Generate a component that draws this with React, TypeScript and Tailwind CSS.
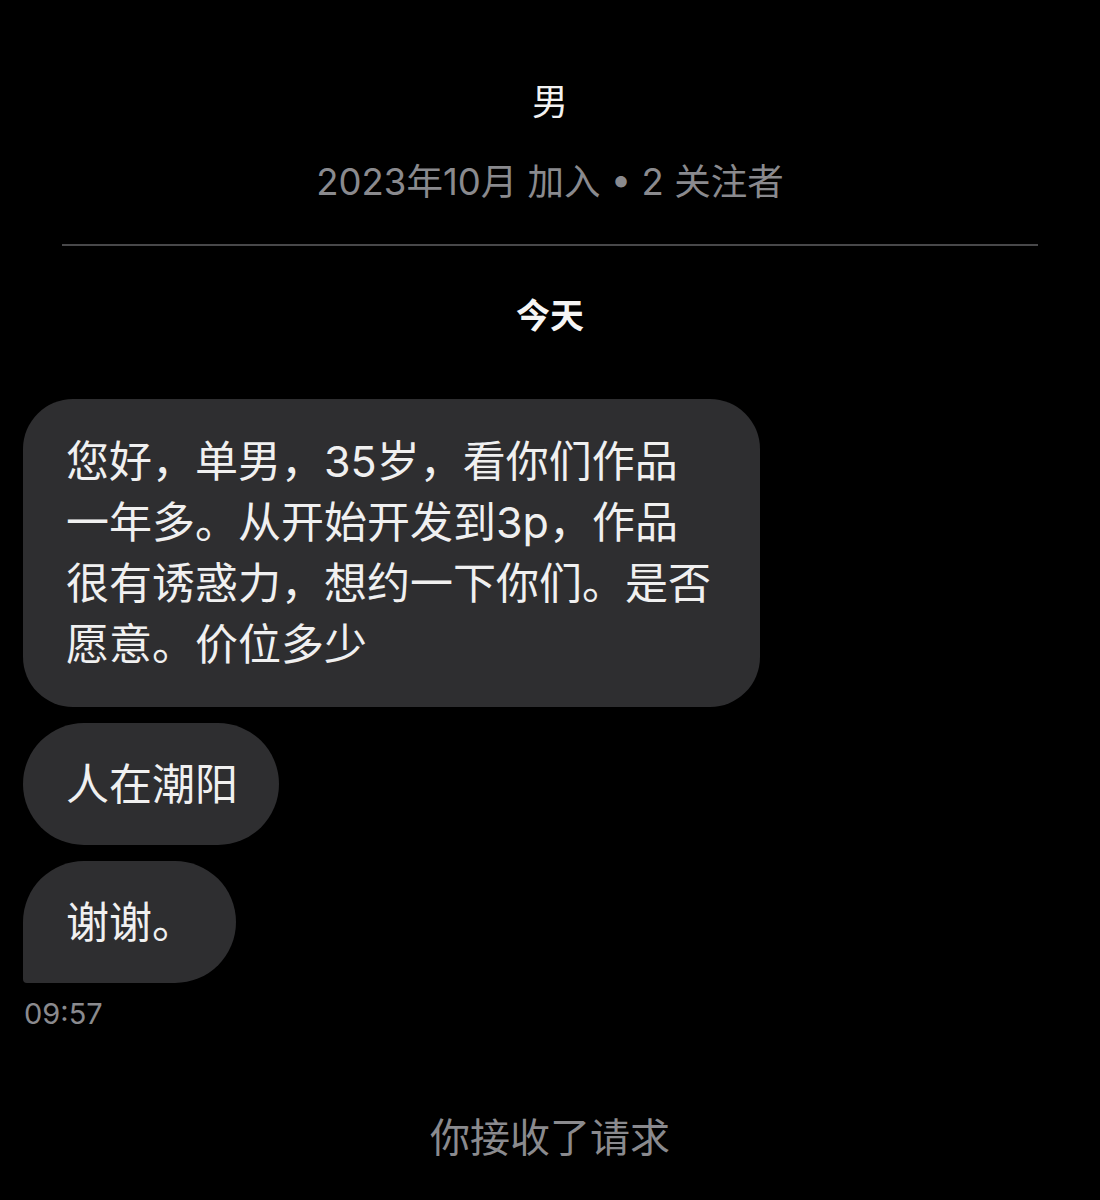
import React from "react";

const font = { fontFamily: 'Inter, "Noto Sans CJK SC", "Noto Sans", sans-serif' };

export default function App() {
  return (
    <div className="min-h-[1200px] w-[1100px] bg-black flex flex-col" style={font}>
      <div className="pt-[80px] text-center text-[36px] leading-[44px] text-[#f2f2f2]">男</div>
      <div className="mt-[36px] text-center text-[36.5px] leading-[44px] text-[#8a8a8e]">
        2023年10月 加入 • 2 关注者
      </div>
      <div className="mt-[40px] mx-[62px] h-[2px] bg-[#48484a]" />
      <div className="mt-[48px] text-center text-[34px] leading-[44px] font-bold text-[#f5f5f5]">今天</div>

      <div className="mt-[61px] pl-[23px] flex flex-col items-start gap-[16px]">
        <div className="w-[737px] rounded-[50px] bg-[#2e2e30] pl-[43px] pr-[20px] py-[32px] text-[43px] leading-[61px] text-[#f0f0f0] whitespace-nowrap">
          <div>您好，单男，35岁，看你们作品</div>
          <div>一年多。从开始开发到3p，作品</div>
          <div>很有诱惑力，想约一下你们。是否</div>
          <div>愿意。价位多少</div>
        </div>
        <div className="h-[122px] w-[256px] rounded-[61px] bg-[#2e2e30] pl-[43px] flex items-center text-[43px] leading-[61px] text-[#f0f0f0] whitespace-nowrap">
          人在潮阳
        </div>
        <div className="h-[122px] w-[213px] rounded-[61px] rounded-bl-[4px] bg-[#2e2e30] pl-[43px] flex items-center text-[43px] leading-[61px] text-[#f0f0f0] whitespace-nowrap">
          谢谢。
        </div>
      </div>

      <div className="mt-[14px] pl-[24px] text-[29px] leading-[34px] text-[#8a8a8e]">09:57</div>

      <div className="mt-[83px] text-center text-[40px] leading-[48px] text-[#8a8a8e]">你接收了请求</div>
    </div>
  );
}
